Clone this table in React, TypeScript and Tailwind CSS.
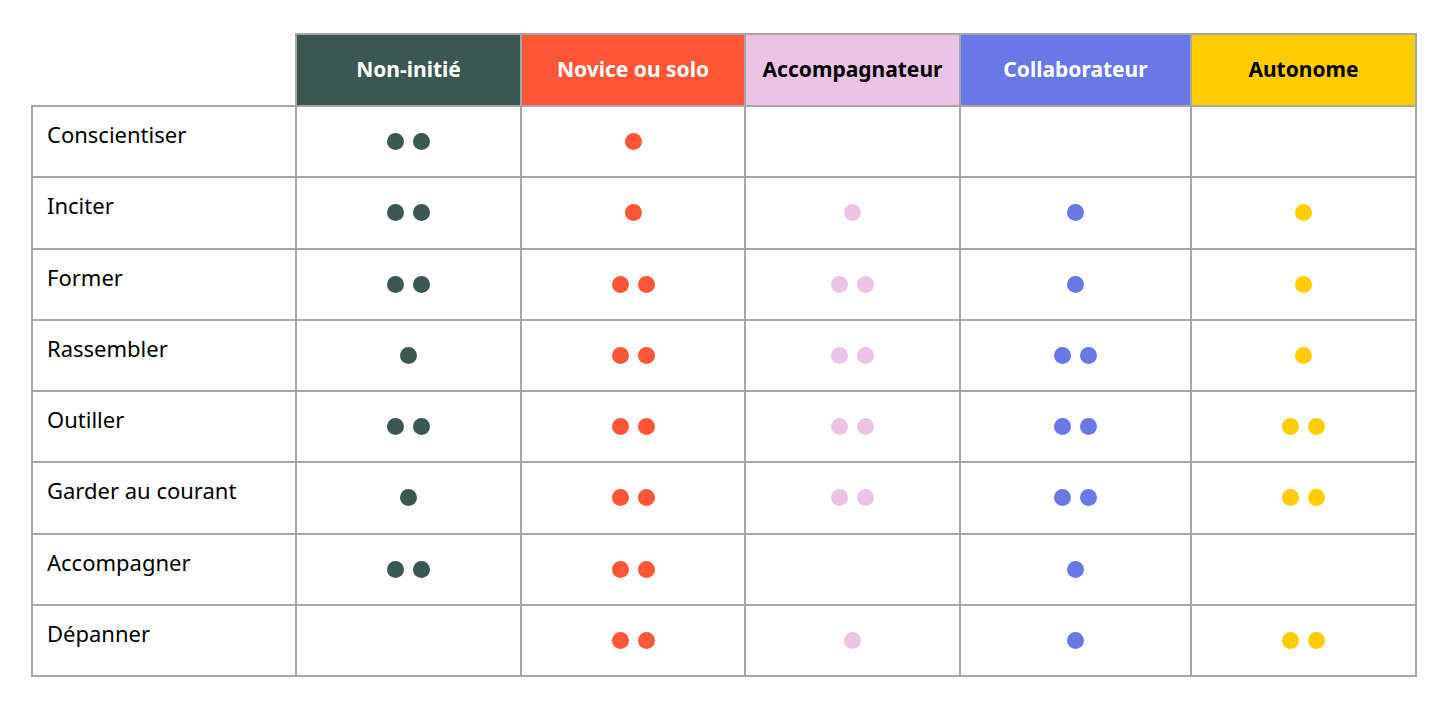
const levels = [
  { label: 'Non-initié', bg: 'bg-[#3b5752]', text: 'text-white', dot: 'bg-[#3b5752]' },
  { label: 'Novice ou solo', bg: 'bg-[#ff5638]', text: 'text-white', dot: 'bg-[#ff5638]' },
  { label: 'Accompagnateur', bg: 'bg-[#ecc3e6]', text: 'text-black', dot: 'bg-[#ecc3e6]' },
  { label: 'Collaborateur', bg: 'bg-[#6878e6]', text: 'text-white', dot: 'bg-[#6878e6]' },
  { label: 'Autonome', bg: 'bg-[#ffcc00]', text: 'text-black', dot: 'bg-[#ffcc00]' },
]

const rows: { label: string; counts: number[] }[] = [
  { label: 'Conscientiser', counts: [2, 1, 0, 0, 0] },
  { label: 'Inciter', counts: [2, 1, 1, 1, 1] },
  { label: 'Former', counts: [2, 2, 2, 1, 1] },
  { label: 'Rassembler', counts: [1, 2, 2, 2, 1] },
  { label: 'Outiller', counts: [2, 2, 2, 2, 2] },
  { label: 'Garder au courant', counts: [1, 2, 2, 2, 2] },
  { label: 'Accompagner', counts: [2, 2, 0, 1, 0] },
  { label: 'Dépanner', counts: [0, 2, 1, 1, 2] },
]

function Dots({ count, color }: { count: number; color: string }) {
  return (
    <div className="flex items-center justify-center gap-[9px]">
      {Array.from({ length: count }).map((_, i) => (
        <span key={i} className={`block size-[17px] rounded-full ${color}`} />
      ))}
    </div>
  )
}

export default function App() {
  return (
    <div className="min-h-[722px] w-full bg-white pt-[33px] pl-[31px] font-['Noto_Sans',sans-serif]">
      <table className="table-fixed border-collapse">
        <colgroup>
          <col className="w-[264px]" />
          <col className="w-[225px]" />
          <col className="w-[224px]" />
          <col className="w-[215px]" />
          <col className="w-[231px]" />
          <col className="w-[225px]" />
        </colgroup>
        <thead>
          <tr>
            <th className="h-[72px] p-0" />
            {levels.map((level) => (
              <th
                key={level.label}
                className={`h-[72px] border-2 border-[#a6a6a6] p-0 text-center text-[21px] font-bold ${level.bg} ${level.text}`}
              >
                {level.label}
              </th>
            ))}
          </tr>
        </thead>
        <tbody>
          {rows.map((row) => (
            <tr key={row.label}>
              <td className="h-[71.25px] border-2 border-[#a6a6a6] pt-[12px] pl-[14px] align-top text-[22px] leading-[30px] text-black">
                {row.label}
              </td>
              {row.counts.map((count, i) => (
                <td key={i} className="h-[71.25px] border-2 border-[#a6a6a6] p-0 align-middle">
                  <Dots count={count} color={levels[i].dot} />
                </td>
              ))}
            </tr>
          ))}
        </tbody>
      </table>
    </div>
  )
}
